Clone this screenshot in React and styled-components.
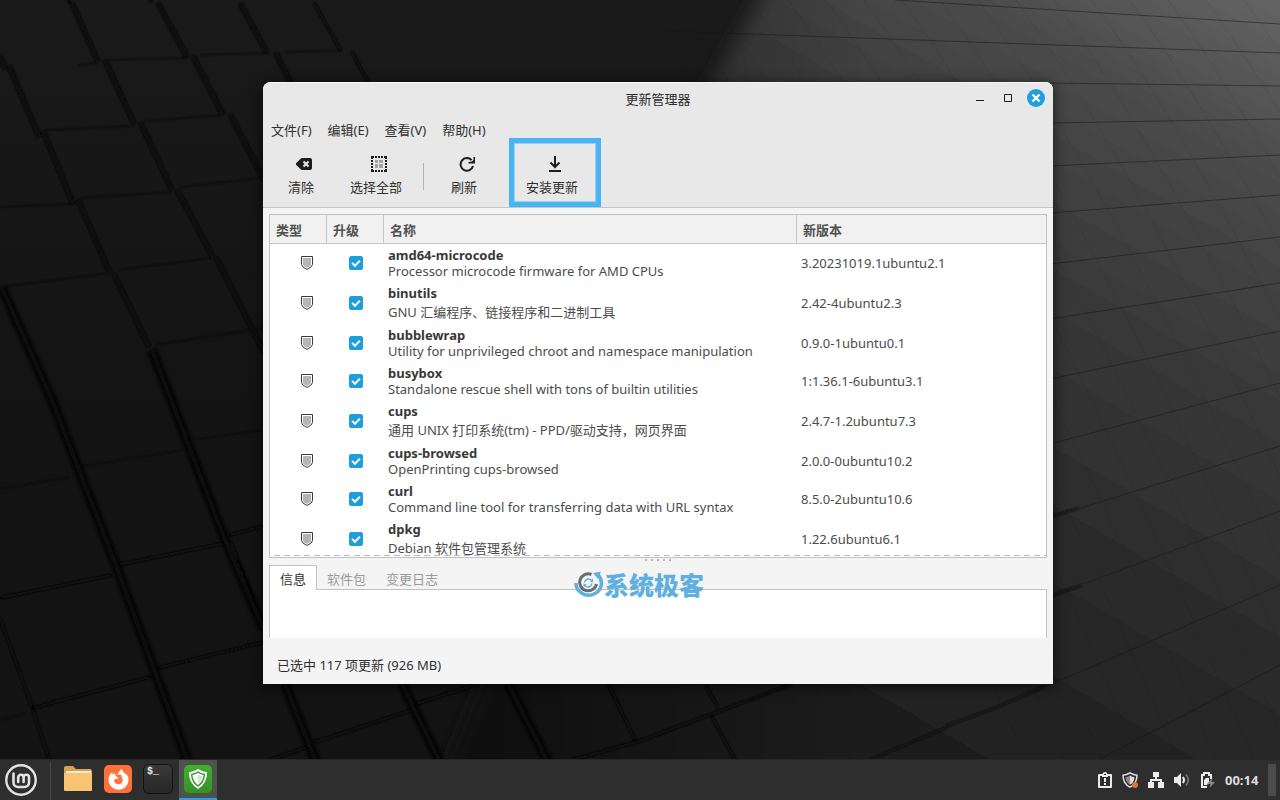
import React, { useState } from 'react';
import styled, { createGlobalStyle } from 'styled-components';
import { FaFirefoxBrowser } from 'react-icons/fa';

const GlobalStyle = createGlobalStyle`
  * {
    box-sizing: border-box;
  }
  body {
    margin: 0;
    background: #151515;
    font-family: 'Noto Sans', 'Noto Sans CJK SC', sans-serif;
    font-size: 13px;
    line-height: 20px;
    color: #303030;
  }
  button {
    border: 0;
    padding: 0;
    background: none;
    font: inherit;
    color: inherit;
  }
`;

const Screen = styled.div`
  position: relative;
  display: flex;
  flex-direction: column;
  height: 100vh;
  min-height: 560px;
  overflow: hidden;
`;

const WallpaperSvg = styled.svg`
  position: absolute;
  inset: 0;
  width: 100%;
  height: 100%;
`;

const Desktop = styled.main`
  position: relative;
  flex: 1;
  min-height: 0;
  display: flex;
  padding: 82px 227px 75px 263px;
`;

/* window */

const Window = styled.section`
  position: relative;
  flex: 1;
  min-width: 0;
  display: flex;
  flex-direction: column;
  background: #f4f4f4;
  border-radius: 8px 8px 0 0;
  box-shadow: 0 2px 12px 2px rgba(0, 0, 0, 0.5);
`;

const Header = styled.header`
  background: #e8e8e8;
  border-bottom: 1px solid #c6c6c6;
  border-radius: 8px 8px 0 0;
  box-shadow: inset 0 1px 0 #f4f4f4;
`;

const TitleBar = styled.div`
  display: grid;
  grid-template-columns: 1fr auto 1fr;
  align-items: center;
  height: 34px;
`;

const Title = styled.h1`
  grid-column: 2;
  margin: 0;
  padding-bottom: 1px;
  font-size: 13px;
  font-weight: 400;
  color: #2b2b2b;
`;

const WindowButtons = styled.div`
  display: flex;
  justify-content: flex-end;
  padding: 0 3px 2px 0;
`;

const WindowButton = styled.button`
  display: grid;
  place-items: center;
  width: 28px;
  height: 28px;
`;

const MenuBar = styled.nav`
  display: flex;
  align-items: flex-start;
  gap: 16px;
  height: 27px;
  padding: 4px 8px 0;
`;

const ToolBar = styled.div`
  display: flex;
  gap: 6px;
  height: 64px;
  padding-left: 13px;
`;

const ToolButton = styled.button`
  display: flex;
  flex-direction: column;
  align-items: center;
  gap: 5px;
  height: 59px;
  padding: 13px 12px 0;
  margin-left: ${(p) => (p.$marked ? '13px' : '0')};
  outline: ${(p) => (p.$marked ? '5px solid #47b4f4' : 'none')};
  box-shadow: ${(p) => (p.$marked ? 'inset 0 0 0 1px #9fcdea' : 'none')};
  span {
    padding-right: 6px;
    white-space: nowrap;
  }
`;

const ToolSeparator = styled.div`
  width: 1px;
  height: 27px;
  margin: 20px 9px 0 -3px;
  background: #b4b4b4;
`;

const Body = styled.div`
  flex: 1;
  min-height: 0;
  display: flex;
  flex-direction: column;
  padding: 6px 6px 0;
`;

/* update list */

const ListFrame = styled.div`
  flex: 1;
  min-height: 0;
  display: flex;
  flex-direction: column;
  padding-bottom: 1px;
  background: #fff;
  border: 1px solid #c2c2c2;
`;

const ListScroll = styled.div`
  flex: 1;
  min-height: 0;
  overflow: hidden;
`;

const Overshoot = styled.div`
  height: 1px;
  background: repeating-linear-gradient(to right, #fff 0 4px, #bdbdbd 4px 10px);
`;

const Table = styled.table`
  width: 100%;
  table-layout: fixed;
  border-collapse: separate;
  border-spacing: 0;
`;

const HeadCell = styled.th`
  width: ${(p) => p.$width || 'auto'};
  height: 29px;
  padding: 1px 6px 0;
  background: #f1f1f1;
  border-bottom: 1px solid #c6c6c6;
  border-right: 1px solid #c6c6c6;
  color: #505050;
  font-weight: 700;
  text-align: left;
  &:last-child {
    border-right: 0;
  }
`;

const Cell = styled.td`
  padding: ${(p) => (p.$tall ? '3px 4px 1px' : '3px 4px')};
  vertical-align: middle;
  color: #4c4c4c;
  svg {
    display: block;
    margin: 0 10px 0 auto;
  }
`;

const PackageName = styled.div`
  font-weight: 700;
  line-height: 16px;
  color: #383838;
`;

const PackageInfo = styled.div`
  line-height: ${(p) => (p.$tall ? '22px' : '16px')};
  white-space: nowrap;
`;

const CheckBox = styled.input`
  appearance: none;
  display: block;
  width: 14px;
  height: 14px;
  margin: 0 auto;
  border-radius: 2px;
  border: 1px solid #b0b0b0;
  background: #fff;
  &:checked {
    border-color: #1f9ede;
    background: #1f9ede;
  }
  &:checked::before {
    content: '';
    display: block;
    box-sizing: border-box;
    width: 8px;
    height: 5px;
    margin: 3px 0 0 2px;
    border: solid #fff;
    border-width: 0 0 2px 2px;
    transform: rotate(-45deg);
  }
`;

/* lower pane */

const Grip = styled.div`
  display: flex;
  justify-content: center;
  gap: 4px;
  height: 7px;
  padding-top: 1px;
  i {
    width: 2px;
    height: 2px;
    background: #b8b8b8;
  }
`;

const Tabs = styled.div`
  display: flex;
  height: 24px;
`;

const Tab = styled.button`
  height: 25px;
  padding: ${(p) => (p.$active ? '1px 10px 0' : '2px 10px 0')};
  color: ${(p) => (p.$active ? '#303030' : '#9a9a9a')};
  background: ${(p) => (p.$active ? '#fff' : 'none')};
  border: solid #c2c2c2;
  border-width: ${(p) => (p.$active ? '1px 1px 0' : '0')};
  z-index: 1;
`;

const TabPage = styled.div`
  height: 49px;
  background: #fff;
  border: 1px solid #c2c2c2;
  border-bottom: 0;
`;

const StatusBar = styled.footer`
  height: 46px;
  padding: 17px 14px 0;
`;

const Watermark = styled.div`
  position: absolute;
  left: 311px;
  bottom: 85px;
  z-index: 2;
  display: flex;
  align-items: center;
  color: #5fb0e0;
  font-family: 'Noto Sans CJK SC', sans-serif;
  font-size: 25px;
  font-weight: 900;
  line-height: 30px;
  pointer-events: none;
`;

/* panel */

const Panel = styled.footer`
  position: relative;
  display: flex;
  align-items: stretch;
  height: 41px;
  padding-right: 4px;
  background: #2e2e2e;
  border-top: 1px solid #262626;
`;

const MenuButton = styled.button`
  display: grid;
  place-items: center;
  width: 42px;
`;

const PanelSeparator = styled.div`
  width: 1px;
  margin: 2px 8px 0;
  background: #454545;
`;

const AppList = styled.div`
  display: flex;
  gap: 2px;
`;

const AppButton = styled.button`
  display: grid;
  place-items: center;
  width: 38px;
  padding-bottom: ${(p) => (p.$active ? '0' : '2px')};
  background: ${(p) => (p.$active ? '#505050' : 'none')};
  border-bottom: ${(p) => (p.$active ? '2px solid #2a9fe0' : '0')};
`;

const AppTile = styled.span`
  display: grid;
  place-items: center;
  width: 28px;
  height: 28px;
  border-radius: 5px;
  background: ${(p) => p.$fill};
  box-shadow: ${(p) => (p.$edge ? `0 0 0 1px ${p.$edge}` : 'none')};
`;

const TerminalTile = styled(AppTile)`
  place-items: start;
  padding: 2px 3px;
  color: #eee;
  font-family: 'Liberation Mono', monospace;
  font-size: 10px;
  font-weight: 700;
  line-height: 10px;
`;

const Tray = styled.div`
  display: flex;
  align-items: center;
  gap: 10px;
  margin-left: auto;
  color: #ececec;
  svg {
    display: block;
  }
`;

const Clock = styled.time`
  width: 35px;
  margin-left: -1px;
  color: #dcdcdc;
  font-size: 13px;
  font-weight: 700;
  white-space: nowrap;
`;

const ShowDesktop = styled.button`
  width: 8px;
  margin: 4px 0 4px 8px;
  background: #4b4b4b;
`;

const updates = [
  { name: 'amd64-microcode', info: 'Processor microcode firmware for AMD CPUs', version: '3.20231019.1ubuntu2.1' },
  { name: 'binutils', info: 'GNU 汇编程序、链接程序和二进制工具', version: '2.42-4ubuntu2.3', tall: true },
  { name: 'bubblewrap', info: 'Utility for unprivileged chroot and namespace manipulation', version: '0.9.0-1ubuntu0.1' },
  { name: 'busybox', info: 'Standalone rescue shell with tons of builtin utilities', version: '1:1.36.1-6ubuntu3.1' },
  { name: 'cups', info: '通用 UNIX 打印系统(tm) - PPD/驱动支持，网页界面', version: '2.4.7-1.2ubuntu7.3', tall: true },
  { name: 'cups-browsed', info: 'OpenPrinting cups-browsed', version: '2.0.0-0ubuntu10.2' },
  { name: 'curl', info: 'Command line tool for transferring data with URL syntax', version: '8.5.0-2ubuntu10.6' },
  { name: 'dpkg', info: 'Debian 软件包管理系统', version: '1.22.6ubuntu6.1', tall: true },
];

const menus = ['文件(F)', '编辑(E)', '查看(V)', '帮助(H)'];
const tabs = ['信息', '软件包', '变更日志'];

// gaps between the raised blocks on the left half, steep side
const steepEdges = [
  'M0 55L5 69', 'M9 66L39 137', 'M43 131L73 204', 'M78 200L110 273', 'M114 274L149 347', 'M152 350L225 540', 'M230 543L264 630',
  'M72 3L98 62', 'M105 60L134 124', 'M140 122L172 190', 'M177 190L213 257', 'M216 258L264 352',
  'M158 3L187 57', 'M193 56L223 115', 'M230 114L264 180',
  'M240 3L267 53', 'M276 53L294 90',
];
const deepEdges = ['M2 288L52 400L82 478', 'M82 478L117 568L155 672L188 762', 'M152 350L225 540L264 630', 'M285 684L316 762', 'M402 684L440 762', 'M508 684L548 762'];
const thinEdges = ['M0 618L32 707L50 762', 'M314 3L341 51', 'M352 52L370 86', 'M608 684L636 742', 'M705 684L718 708', 'M711 715L736 762', 'M149 0L152 2', 'M68 0L70 3'];
const crossEdges = [
  'M0 598L112 575', 'M118 565L225 543', 'M230 535L264 526', 'M33 708L150 677', 'M158 668L264 642', 'M315 742L412 710',
  'M416 704L478 684', 'M270 760L307 747', 'M572 760L640 741L712 714L792 684',
];
const slabEdges = ['M870 760L945 728L946 726L995 708L1045 686', 'M1050 517L1079 508', 'M1050 596L1082 585'];
const faintCross = [
  'M78 65L98 63', 'M110 60L187 58', 'M200 55L267 53', 'M285 52L341 51', 'M45 130L134 126', 'M145 121L223 115',
  'M0 207L73 204', 'M80 198L172 192', 'M180 187L264 178', 'M0 287L110 273', 'M118 270L213 258',
  'M155 345L264 328', 'M0 489L70 477', 'M78 467L183 450', 'M190 440L264 430', 'M0 720L25 714',
];
const slabLines = [
  'M895 0L1280 24', 'M666 31L1280 53', 'M1050 83L1280 86', 'M1050 123L1280 119', 'M1050 166L1280 155', 'M1050 213L1280 195',
  'M1050 264L1280 237', 'M1050 319L1280 283', 'M1050 379L1280 331', 'M1050 444L1280 383', 'M1081 508L1280 446',
  'M1083 584L1280 511', 'M1045 686L1082 671L1280 585', 'M1098 760L1280 665',
];
const slabColumns = Array.from({ length: 18 }, (_, i) => {
  const x = 636 + i * 38;
  return `M${x} 0Q${x + 160} 220 ${x + 390} 760`;
});

function Wallpaper() {
  return (
    <WallpaperSvg viewBox="0 0 1280 800" preserveAspectRatio="xMidYMid slice" aria-hidden="true">
      <defs>
        <linearGradient id="base" x1="0" y1="0" x2="0" y2="1">
          <stop offset="0" stopColor="#1a1a1a" />
          <stop offset="0.5" stopColor="#131313" />
          <stop offset="1" stopColor="#131313" />
        </linearGradient>
        <linearGradient id="slab" gradientUnits="userSpaceOnUse" x1="1280" y1="0" x2="860" y2="720">
          <stop offset="0" stopColor="#646464" />
          <stop offset="0.2" stopColor="#494949" />
          <stop offset="0.45" stopColor="#373737" />
          <stop offset="0.75" stopColor="#282828" />
          <stop offset="1" stopColor="#1e1e1e" />
        </linearGradient>
        <linearGradient id="fade" x1="0" y1="0" x2="1" y2="0">
          <stop offset="0" stopColor="#000" stopOpacity="0.55" />
          <stop offset="0.5" stopColor="#000" stopOpacity="0" />
        </linearGradient>
        <filter id="soft" x="-20%" y="-20%" width="140%" height="140%">
          <feGaussianBlur stdDeviation="9" />
        </filter>
        <filter id="edge" filterUnits="userSpaceOnUse" x="0" y="0" width="1280" height="800">
          <feGaussianBlur stdDeviation="1.2" />
        </filter>
      </defs>
      <rect width="1280" height="800" fill="url(#base)" />
      <path d="M778 -30L708 90L600 400L420 830H1310V-30Z" fill="url(#slab)" filter="url(#soft)" />
      <path d="M778 -30L708 90L600 400L420 830H1310V-30Z" fill="url(#fade)" filter="url(#soft)" />
      <g fill="none" stroke="#000" strokeOpacity="0.07">
        {slabColumns.map((d) => <path key={d} d={d} />)}
      </g>
      <g fill="none" stroke="#161616" strokeOpacity="0.5">
        {slabLines.map((d) => <path key={d} d={d} />)}
      </g>
      <g fill="none" filter="url(#edge)">
        <g stroke="#0d0d0d" strokeWidth="1">
          {faintCross.map((d) => <path key={d} d={d} />)}
        </g>
        <g stroke="#080808" strokeWidth="12" strokeOpacity="0.55">
          {deepEdges.map((d) => <path key={d} d={d} />)}
        </g>
        <g stroke="#070707" strokeWidth="5">
          {steepEdges.map((d) => <path key={d} d={d} />)}
          {deepEdges.map((d) => <path key={d} d={d} />)}
        </g>
        <g stroke="#070707" strokeWidth="3">
          {thinEdges.map((d) => <path key={d} d={d} />)}
          {crossEdges.map((d) => <path key={d} d={d} />)}
        </g>
        <g stroke="#0c0c0c" strokeWidth="2">
          {slabEdges.map((d) => <path key={d} d={d} />)}
        </g>
      </g>
    </WallpaperSvg>
  );
}

const ClearIcon = () => (
  <svg width="16" height="16" viewBox="0 0 16 16">
    <path d="M5.500 2H14a2 2 0 0 1 2 2v8a2 2 0 0 1-2 2H5.500L0 8.700V7.300Z" fill="#1c1c1c" />
    <path d="M7.500 5.500l5 5M12.500 5.500l-5 5" stroke="#e8e8e8" strokeWidth="2" />
  </svg>
);

const SelectAllIcon = () => (
  <svg width="16" height="16" viewBox="0 0 16 16">
    <path d="M0 0h3v2H2v1H0zM13 0h3v3h-2V2h-1zM0 13h2v1h1v2H0zM14 13h2v3h-3v-2h1z" fill="#1c1c1c" />
    <path d="M4 0h2v2H4zM7 0h2v2H7zM10 0h2v2h-2zM4 14h2v2H4zM7 14h2v2H7zM10 14h2v2h-2z" fill="#1c1c1c" />
    <path d="M0 4h2v2H0zM0 7h2v2H0zM0 10h2v2H0zM14 4h2v2h-2zM14 7h2v2h-2zM14 10h2v2h-2z" fill="#1c1c1c" />
    <path d="M4 4h3v3H4zM8 4h4v3H8zM4 8h3v4H4zM8 8h4v4H8z" fill="#a3a3a3" />
  </svg>
);

const RefreshIcon = () => (
  <svg width="16" height="16" viewBox="0 0 16 16" fill="none">
    <path d="M12.600 4.200A6.300 6.300 0 1 0 14 10" stroke="#1c1c1c" strokeWidth="2" />
    <path d="M16 1v6.500H9.500V6L13 5.500L14.500 4V1Z" fill="#1c1c1c" />
  </svg>
);

const InstallIcon = () => (
  <svg width="16" height="16" viewBox="0 0 16 16" fill="none" stroke="#1c1c1c" strokeWidth="2">
    <path d="M8 0V11M3.500 6.500L8 11L12.500 6.500M2 15H14" />
  </svg>
);

const ShieldIcon = () => (
  <svg width="12" height="14" viewBox="0 0 12 14">
    <path d="M0.500 0.500H11.500V8.500Q11.500 11 6 13.500Q0.500 11 0.500 8.500Z" fill="#fff" stroke="#3a3a3a" />
    <path d="M2 2H10V8.500Q10 10 6 12Q2 10 2 8.500Z" fill="#b5b5b5" />
  </svg>
);

const MintLogo = () => (
  <svg width="32" height="32" viewBox="0 0 32 32" fill="none" stroke="#e4e4e4" strokeLinecap="round">
    <circle cx="16" cy="16" r="14.700" strokeWidth="2.400" />
    <path d="M8.500 9.500V18.500a4.500 4.500 0 0 0 4.500 4.500H19.500a4.500 4.500 0 0 0 4.500-4.500V13.500a2.700 2.700 0 0 0-5.400 0V18M18.600 13.500a2.700 2.700 0 0 0-5.400 0V18" strokeWidth="2.600" />
  </svg>
);

const FolderIcon = () => (
  <svg width="28" height="28" viewBox="0 0 28 28">
    <path d="M0 3Q0 1 2 1H9L12 4H26Q28 4 28 6V12H0Z" fill="#d3a254" />
    <path d="M2 6H27V10H2Z" fill="#f6ead2" />
    <path d="M0 9Q0 8 1 8H27Q28 8 28 9V25Q28 26 27 26H1Q0 26 0 25Z" fill="#f7c571" />
  </svg>
);

const UpdateIcon = () => (
  <svg width="22" height="22" viewBox="0 0 22 22">
    <path d="M11 1Q15.500 4 20 4.300Q20.500 15 11 21Q1.500 15 2 4.300Q6.500 4 11 1Z" fill="#fff" />
    <path d="M11 4.200Q14 6 17.300 6.600Q17 13.800 11 18Q5 13.800 4.700 6.600Q8 6 11 4.200Z" fill="#fff" stroke="#3c9c2c" strokeWidth="1.500" />
    <path d="M11 6.500Q13 7.500 15.300 8Q15 13 11 16Z" fill="#d5e6d2" />
  </svg>
);

const ReportIcon = () => (
  <svg width="14" height="16" viewBox="0 0 14 16">
    <path d="M1 2H4.500Q5 0 7 0T9.500 2H13Q14 2 14 3V15Q14 16 13 16H1Q0 16 0 15V3Q0 2 1 2ZM2 4V14H12V4H10V5H4V4ZM6 2V3H8V2Z" fill="currentColor" fillRule="evenodd" />
    <path d="M6 6H8V10H6ZM6 11H8V13H6Z" fill="currentColor" />
  </svg>
);

const UpdateTrayIcon = () => (
  <svg width="16" height="16" viewBox="0 0 16 16">
    <path d="M8 0.800Q11.500 3 15 3.200Q15 11.500 8 15.200Q1 11.500 1 3.200Q4.500 3 8 0.800Z" fill="none" stroke="#e0e0e0" strokeWidth="1.500" />
    <path d="M8 3.500Q5.500 5 3.500 5.200Q4 10.500 8 12.800Z" fill="#8a8a8a" />
    <path d="M8 3.500Q10.500 5 12.500 5.200Q12 10.500 8 12.800Z" fill="#dcdcdc" />
    <circle cx="13" cy="13" r="3" fill="#e2703a" />
  </svg>
);

const NetworkIcon = () => (
  <svg width="16" height="16" viewBox="0 0 16 16" fill="currentColor">
    <path d="M5 0h6v5H9v2h5v3h2v6h-6v-6h2V9H4v1h2v6H0v-6h2V7h5V5H5z" />
  </svg>
);

const SoundIcon = () => (
  <svg width="16" height="16" viewBox="0 0 16 16" fill="none">
    <path d="M0 5H3L7 1V15L3 11H0Z" fill="currentColor" />
    <path d="M9 5Q11 8 9 11" stroke="currentColor" strokeWidth="2" />
    <path d="M12 2.500Q16.500 8 12 13.500" stroke="#7d7d7d" strokeWidth="1.500" />
  </svg>
);

const BatteryIcon = () => (
  <svg width="16" height="16" viewBox="0 0 16 16" fill="none">
    <path d="M7 15H2V3H4V1H9V3H11V7" stroke="currentColor" strokeWidth="2" />
    <path d="M4 8Q6 5 9 6V10L7 13H4Z" fill="currentColor" />
    <path d="M12.500 6L7 12H10.500L9.500 16L15 10H11.500Z" fill="#8c8c8c" />
  </svg>
);

const WatermarkLogo = () => (
  <svg width="30" height="28" viewBox="0 0 30 28" fill="none">
    <path d="M2 13A12.700 12 0 1 0 24 5" stroke="#5fb0e0" strokeWidth="3.500" />
    <path d="M19 3L27 1.500L24 9Z" fill="#5fb0e0" />
    <path d="M17.500 4.500A8.500 8.500 0 1 0 22.500 14" stroke="#6c6c70" strokeWidth="3" />
    <path d="M10.500 12.500A4 4 0 0 1 17.500 10.500M18 13.500A4 4 0 0 1 11 15.500" stroke="#5fb0e0" strokeWidth="1.500" />
    <path d="M16 11.500L19 8.500V12.500ZM12.500 14.500L9.500 17.500V13.500Z" fill="#5fb0e0" />
  </svg>
);

function UpdateRow({ item }) {
  const [checked, setChecked] = useState(true);
  return (
    <tr>
      <Cell><ShieldIcon /></Cell>
      <Cell>
        <CheckBox type="checkbox" aria-label={item.name} checked={checked} onChange={() => setChecked(!checked)} />
      </Cell>
      <Cell $tall={item.tall}>
        <PackageName>{item.name}</PackageName>
        <PackageInfo $tall={item.tall}>{item.info}</PackageInfo>
      </Cell>
      <Cell>{item.version}</Cell>
    </tr>
  );
}

function UpdateManager() {
  const [tab, setTab] = useState('信息');
  return (
    <Window>
      <Header>
        <TitleBar>
          <Title>更新管理器</Title>
          <WindowButtons>
            <WindowButton aria-label="最小化">
              <svg width="8" height="8"><path d="M0 6.500H8" stroke="#1c1c1c" /></svg>
            </WindowButton>
            <WindowButton aria-label="最大化">
              <svg width="8" height="8"><path d="M0.500 0.500H7.500V7.500H0.500Z" fill="none" stroke="#1c1c1c" /></svg>
            </WindowButton>
            <WindowButton aria-label="关闭">
              <svg width="18" height="18" viewBox="0 0 18 18">
                <circle cx="9" cy="9" r="9" fill="#1f9ede" />
                <path d="M5.500 5.500L12.500 12.500M12.500 5.500L5.500 12.500" stroke="#fff" strokeWidth="2.400" />
              </svg>
            </WindowButton>
          </WindowButtons>
        </TitleBar>
        <MenuBar>
          {menus.map((m) => <button key={m}>{m}</button>)}
        </MenuBar>
        <ToolBar>
          <ToolButton><ClearIcon /><span>清除</span></ToolButton>
          <ToolButton><SelectAllIcon /><span>选择全部</span></ToolButton>
          <ToolSeparator />
          <ToolButton><RefreshIcon /><span>刷新</span></ToolButton>
          <ToolButton $marked><InstallIcon /><span>安装更新</span></ToolButton>
        </ToolBar>
      </Header>
      <Body>
        <ListFrame>
          <ListScroll>
            <Table>
              <thead>
                <tr>
                  <HeadCell $width="57px">类型</HeadCell>
                  <HeadCell $width="57px">升级</HeadCell>
                  <HeadCell>名称</HeadCell>
                  <HeadCell $width="249px">新版本</HeadCell>
                </tr>
              </thead>
              <tbody>
                {updates.map((item) => <UpdateRow key={item.name} item={item} />)}
              </tbody>
            </Table>
          </ListScroll>
          <Overshoot />
        </ListFrame>
        <Grip><i /><i /><i /><i /><i /></Grip>
        <Tabs role="tablist">
          {tabs.map((t) => (
            <Tab key={t} role="tab" aria-selected={t === tab} $active={t === tab} onClick={() => setTab(t)}>{t}</Tab>
          ))}
        </Tabs>
        <TabPage role="tabpanel" />
      </Body>
      <StatusBar>已选中 117 项更新 (926 MB)</StatusBar>
      <Watermark><WatermarkLogo />系统极客</Watermark>
    </Window>
  );
}

function App() {
  return (
    <Screen>
      <GlobalStyle />
      <Wallpaper />
      <Desktop>
        <UpdateManager />
      </Desktop>
      <Panel>
        <MenuButton aria-label="菜单"><MintLogo /></MenuButton>
        <PanelSeparator />
        <AppList>
          <AppButton aria-label="文件"><FolderIcon /></AppButton>
          <AppButton aria-label="Firefox">
            <AppTile $fill="#ff7139"><FaFirefoxBrowser size={21} color="#fff" /></AppTile>
          </AppButton>
          <AppButton aria-label="终端">
            <TerminalTile $fill="linear-gradient(#3a3a3a, #262626)" $edge="#121212">$_</TerminalTile>
          </AppButton>
          <AppButton aria-label="更新管理器" $active>
            <AppTile $fill="linear-gradient(#45ad33, #37902a)" $edge="#2c6b22"><UpdateIcon /></AppTile>
          </AppButton>
        </AppList>
        <Tray>
          <ReportIcon />
          <UpdateTrayIcon />
          <NetworkIcon />
          <SoundIcon />
          <BatteryIcon />
          <Clock>00:14</Clock>
        </Tray>
        <ShowDesktop aria-label="显示桌面" />
      </Panel>
    </Screen>
  );
}

export default App;
